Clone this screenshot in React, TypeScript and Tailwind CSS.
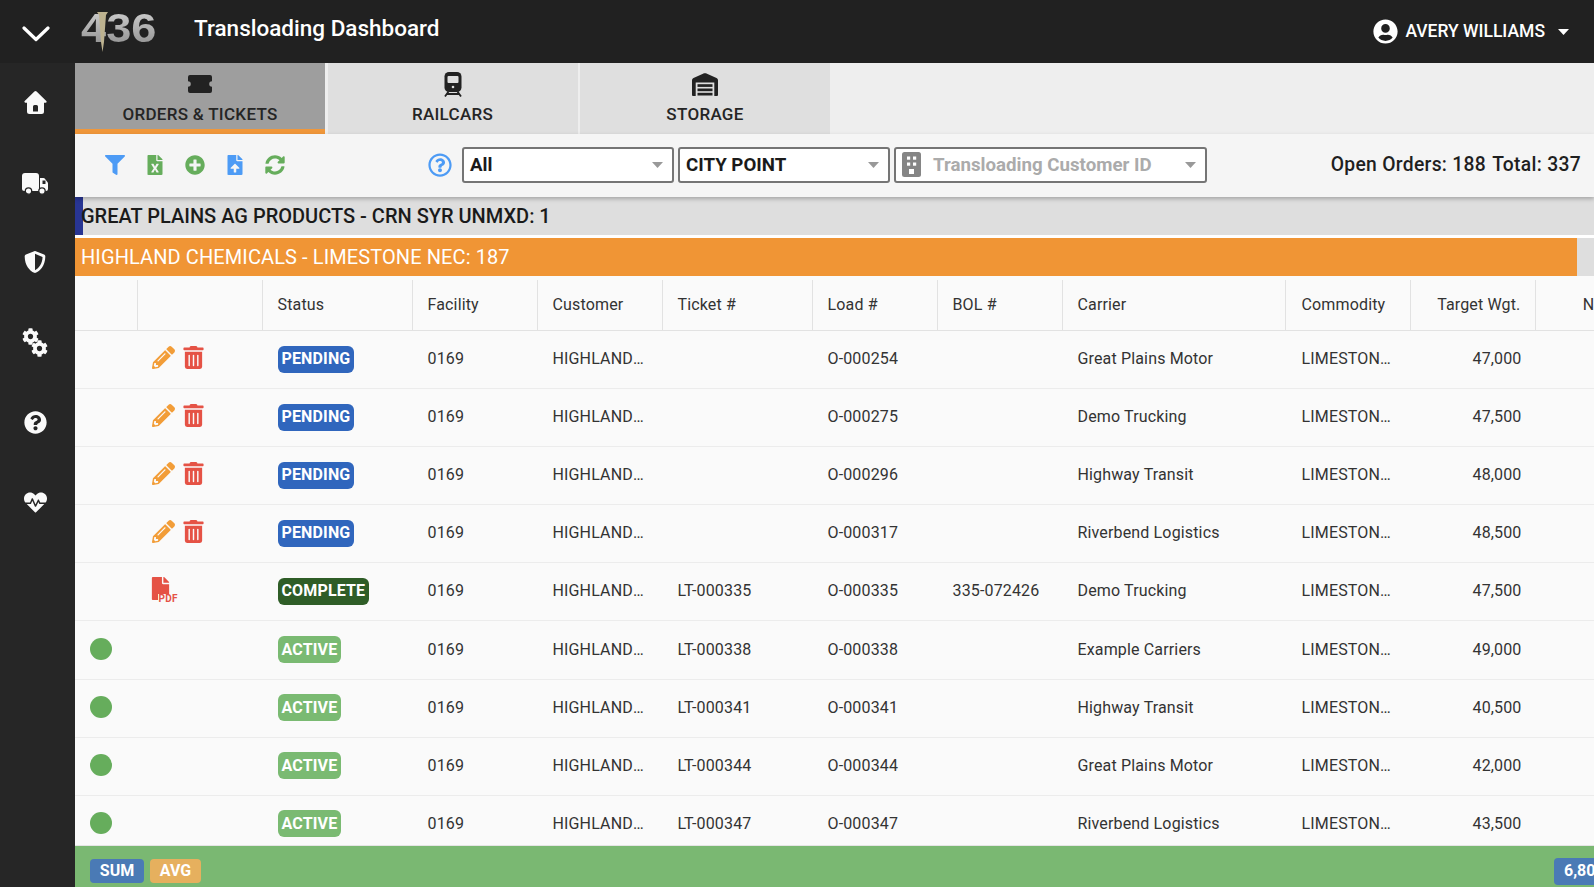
import React from 'react';
import { FaShieldAlt, FaCog, FaQuestionCircle, FaHeartbeat, FaFilter, FaFileExcel, FaPlusCircle, FaFileUpload, FaSyncAlt, FaRegQuestionCircle, FaUserCircle, FaPencilAlt, FaTrashAlt, FaFile } from 'react-icons/fa';

const cols = ['w-[62.5px]', 'w-[125px]', 'w-[150px]', 'w-[125px]', 'w-[125px]', 'w-[150px]', 'w-[125px]', 'w-[125px]', 'w-[223px]', 'w-[125px]', 'w-[125px]', 'w-[125px]'];

type Row = { s: 'PENDING' | 'COMPLETE' | 'ACTIVE'; ticket: string; load: string; bol: string; carrier: string; wgt: string };
const rows: Row[] = [
  { s: 'PENDING', ticket: '', load: 'O-000254', bol: '', carrier: 'Great Plains Motor', wgt: '47,000' },
  { s: 'PENDING', ticket: '', load: 'O-000275', bol: '', carrier: 'Demo Trucking', wgt: '47,500' },
  { s: 'PENDING', ticket: '', load: 'O-000296', bol: '', carrier: 'Highway Transit', wgt: '48,000' },
  { s: 'PENDING', ticket: '', load: 'O-000317', bol: '', carrier: 'Riverbend Logistics', wgt: '48,500' },
  { s: 'COMPLETE', ticket: 'LT-000335', load: 'O-000335', bol: '335-072426', carrier: 'Demo Trucking', wgt: '47,500' },
  { s: 'ACTIVE', ticket: 'LT-000338', load: 'O-000338', bol: '', carrier: 'Example Carriers', wgt: '49,000' },
  { s: 'ACTIVE', ticket: 'LT-000341', load: 'O-000341', bol: '', carrier: 'Highway Transit', wgt: '40,500' },
  { s: 'ACTIVE', ticket: 'LT-000344', load: 'O-000344', bol: '', carrier: 'Great Plains Motor', wgt: '42,000' },
  { s: 'ACTIVE', ticket: 'LT-000347', load: 'O-000347', bol: '', carrier: 'Riverbend Logistics', wgt: '43,500' },
];

const badgeColor = { PENDING: 'bg-[#3066bd]', COMPLETE: 'bg-[#2f5d27]', ACTIVE: 'bg-[#7aba72]' };

function Caret({ className }: { className: string }) {
  return (
    <svg width="11" height="6" viewBox="0 0 11 6" className={className}>
      <path d="M0 0h11L5.5 6z" fill="currentColor" />
    </svg>
  );
}

function HomeIcon() {
  return (
    <svg width="23" height="23" viewBox="0 0 23 23" fill="#fafafa">
      <path fillRule="evenodd" d="M10.4.6a1.6 1.6 0 0 1 2.2 0l9.7 9.400c.7.7.3 1.700-.7 1.700H20v8.800a2.500 2.500 0 0 1-2.500 2.500h-12A2.500 2.500 0 0 1 3 20.500v-8.800H1.400c-1 0-1.400-1-.7-1.700zM9 15.500v5h5v-5a1.500 1.500 0 0 0-1.500-1.500h-2A1.500 1.500 0 0 0 9 15.500z" />
    </svg>
  );
}

function TruckIcon() {
  return (
    <svg width="26" height="22" viewBox="0 0 26 22" fill="#fafafa" className="mt-[3px]">
      <path d="M3 0h11a3 3 0 0 1 3 3v15H2.500A2.500 2.500 0 0 1 0 15.500V3a3 3 0 0 1 3-3z" />
      <path d="M18 5h3.500a1.500 1.500 0 0 1 1.200.6l2.700 3.400c.4.5.6 1 .6 1.600v5.400a2 2 0 0 1-2 2h-6z" />
      <rect x="20.500" y="7.500" width="3" height="3.500" fill="#262626" />
      <circle cx="6.500" cy="18" r="3.200" stroke="#262626" strokeWidth="1.300" />
      <circle cx="20" cy="18" r="3.200" stroke="#262626" strokeWidth="1.300" />
    </svg>
  );
}

function CogsIcon() {
  return (
    <div className="relative w-[26px] h-[29px]">
      <FaCog size={17} className="absolute left-0 top-0" />
      <FaCog size={17} className="absolute right-0 bottom-0" />
    </div>
  );
}

function TicketIcon() {
  return (
    <svg width="26" height="18" viewBox="0 0 26 18" fill="#222">
      <path d="M3 0h20a2 2 0 0 1 2 2v4.200a2.800 2.800 0 0 0 0 5.600V16a2 2 0 0 1-2 2H3a2 2 0 0 1-2-2v-4.200a2.800 2.800 0 0 0 0-5.600V2a2 2 0 0 1 2-2z" />
    </svg>
  );
}

function TrainIcon() {
  return (
    <svg width="18" height="25" viewBox="0 0 18 25">
      <rect x="0.500" y="0" width="17" height="20" rx="4.500" fill="#222" />
      <rect x="3.500" y="4" width="11" height="7" rx="1" fill="#dfdfdf" />
      <circle cx="9" cy="15" r="1.300" fill="#dfdfdf" />
      <path d="M4.500 19.500 1 24.500M13.500 19.500l3.500 5M3.500 22h11" stroke="#222" strokeWidth="1.800" fill="none" />
    </svg>
  );
}

function WarehouseIcon() {
  return (
    <svg width="26" height="23" viewBox="0 0 26 23" fill="#222">
      <path d="M0 22V7.500c0-1 .5-1.900 1.500-2.400L11 .7c1.300-.6 2.700-.6 4 0l9.500 4.400c1 .5 1.500 1.400 1.500 2.400V22a1 1 0 0 1-1 1h-2.700V9.500H3.700V23H1a1 1 0 0 1-1-1z" />
      <rect x="5.500" y="11.200" width="15" height="2.700" />
      <rect x="5.500" y="15.500" width="15" height="2.700" />
      <rect x="5.500" y="19.800" width="15" height="2.700" />
    </svg>
  );
}

function BuildingIcon() {
  return (
    <svg width="19" height="25" viewBox="0 0 19 25">
      <rect width="19" height="25" rx="2.500" fill="#858585" />
      <rect x="5" y="4.500" width="3.200" height="3.200" fill="#fff" />
      <rect x="11" y="4.500" width="3.200" height="3.200" fill="#fff" />
      <rect x="5" y="10.500" width="3.200" height="3.200" fill="#fff" />
      <rect x="11" y="10.500" width="3.200" height="3.200" fill="#fff" />
      <rect x="7" y="17" width="5" height="5" fill="#fff" />
    </svg>
  );
}

function Logo() {
  return (
    <div className="relative w-[75px] h-[40px] ml-[6px] pb-[7px] flex items-center">
      <span className="origin-left scale-x-[1.13] font-['Liberation_Sans',sans-serif] font-bold text-[40px] leading-none bg-gradient-to-b from-[#d2d2d2] to-[#8f8f8f] bg-clip-text text-transparent blur-[0.6px]">436</span>
      <svg width="11" height="40" viewBox="0 0 11 40" className="absolute left-[16px] top-0">
        <path d="M0 0h11L9 3 7 30l-1.500 10L4 30 2 3z" fill="#bdb28f" />
      </svg>
    </div>
  );
}

function Tab({ icon, label, active, w }: { icon: React.ReactNode; label: string; active?: boolean; w: string }) {
  return (
    <div className={`${w} h-[71px] flex flex-col items-center pt-[8px] ${active ? 'bg-[#9e9e9e] border-b-[5px] border-[#f0973a]' : 'bg-[#dfdfdf]'}`}>
      <div className="h-[26px] flex items-center justify-center">{icon}</div>
      <div className="mt-[7px] text-[17px] tracking-[0.3px] leading-[20px] font-medium text-[#252525]">{label}</div>
    </div>
  );
}

function Select({ w, children }: { w: string; children: React.ReactNode }) {
  return (
    <div className={`${w} h-[36px] bg-white border-2 border-[#757575] rounded-[3px] flex items-center pl-[6px] pr-[9px] text-[18.7px] font-bold text-[#1a1a1a]`}>
      {children}
      <Caret className="ml-auto text-[#999]" />
    </div>
  );
}

export default function App() {
  return (
    <div className="h-screen w-full overflow-hidden flex flex-col font-[Roboto,sans-serif] text-[#333]">
      <header className="h-[63px] shrink-0 bg-[#212121] flex items-center text-white">
        <div className="w-[75px] flex justify-center">
          <svg width="28" height="16" viewBox="0 0 28 16" className="mr-[3px] mt-[4px]">
            <path d="M2 2l12 11.500L26 2" stroke="#fff" strokeWidth="3.200" fill="none" strokeLinecap="round" strokeLinejoin="round" />
          </svg>
        </div>
        <Logo />
        <div className="ml-[38px] text-[22.5px] font-medium leading-none -mt-[6px]">Transloading Dashboard</div>
        <div className="ml-auto flex items-center pr-[25px]">
          <FaUserCircle size={25} />
          <span className="ml-[7px] text-[17.5px] font-medium">AVERY WILLIAMS</span>
          <Caret className="ml-[13px] text-white" />
        </div>
      </header>
      <div className="flex-1 min-h-0 flex">
        <aside className="w-[75px] shrink-0 bg-[#262626] text-[#fafafa] flex flex-col pr-[5px]">
          {[<HomeIcon />, <TruckIcon />, <FaShieldAlt size={22} />, <CogsIcon />, <FaQuestionCircle size={23} />, <FaHeartbeat size={23} />].map((ic, i) => (
            <div key={i} className={`${i === 0 ? 'h-[79px]' : 'h-[80px]'} flex items-center justify-center`}>{ic}</div>
          ))}
        </aside>
        <main className="flex-1 min-w-0 flex flex-col">
          <div className="h-[71px] shrink-0 bg-[#eeeeee] flex gap-[2.5px]">
            <Tab w="w-[250px]" active icon={<TicketIcon />} label="ORDERS & TICKETS" />
            <Tab w="w-[250px]" icon={<TrainIcon />} label="RAILCARS" />
            <Tab w="w-[250px]" icon={<WarehouseIcon />} label="STORAGE" />
          </div>
          <div className="relative z-10 h-[63px] shrink-0 bg-[#f5f5f5] shadow-[0_2px_4px_rgba(0,0,0,0.25)] flex items-center pl-[30px] pr-[13px] pb-[2px]">
            <div className="w-[20px] flex justify-center"><FaFilter size={20} className="text-[#4d9bf5]" /></div>
            <div className="w-[20px] ml-[20px] flex justify-center"><FaFileExcel size={20} className="text-[#66ad5c]" /></div>
            <div className="w-[20px] ml-[20px] flex justify-center"><FaPlusCircle size={20} className="text-[#66ad5c]" /></div>
            <div className="w-[20px] ml-[20px] flex justify-center"><FaFileUpload size={20} className="text-[#4d9bf5]" /></div>
            <div className="w-[20px] ml-[20px] flex justify-center"><FaSyncAlt size={20} className="text-[#66ad5c]" /></div>
            <FaRegQuestionCircle size={24} className="ml-[143px] text-[#4d9bf5]" />
            <div className="ml-[10px] flex gap-[4px]">
              <Select w="w-[212px]"><span className="pt-[2px]">All</span></Select>
              <Select w="w-[212px]"><span className="pt-[2px]">CITY POINT</span></Select>
              <Select w="w-[313px]">
                <BuildingIcon />
                <span className="ml-[12px] pt-[2px] text-[#ababab]">Transloading Customer ID</span>
              </Select>
            </div>
            <div className="ml-auto mt-[2px] flex gap-[6px] text-[19.3px] font-medium text-[#1f1f1f] tracking-[0.3px] whitespace-nowrap">
              <span>Open Orders: 188</span>
              <span>Total: 337</span>
            </div>
          </div>
          <div className="relative h-[38px] shrink-0 bg-[#dedede] flex items-center pl-[6px] text-[20px] font-medium text-[#1a1a1a] whitespace-nowrap">
            <div className="absolute left-0 top-0 bottom-0 w-[8px] bg-[#283593]" />
            <span className="relative">GREAT PLAINS AG PRODUCTS - CRN SYR UNMXD: 1</span>
          </div>
          <div className="h-[3px] shrink-0 bg-white" />
          <div className="h-[38px] shrink-0 bg-[#dedede] flex">
            <div className="w-[1502px] bg-[#f09535] flex items-center pl-[6px] text-[20px] tracking-[0.1px] text-white whitespace-nowrap">HIGHLAND CHEMICALS - LIMESTONE NEC: 187</div>
          </div>
          <div className="flex-1 min-h-0 overflow-hidden bg-[#fafafa] text-[16px] tracking-[0.15px]">
            <div className="h-[55px] flex border-b border-[#e2e2e2] pt-[4px]">
              {['', '', 'Status', 'Facility', 'Customer', 'Ticket #', 'Load #', 'BOL #', 'Carrier', 'Commodity', 'Target Wgt.', 'Net Wgt.'].map((h, i) => (
                <div key={i} className={`${cols[i]} shrink-0 flex items-center whitespace-nowrap ${i === 9 ? 'pl-[16px] pr-[14px]' : i === 10 ? 'pl-[16px] pr-[14px]' : 'px-[15px]'} ${i < 11 ? 'border-r border-[#e2e2e2]' : ''} ${i >= 10 ? 'justify-end' : ''}`}>{h}</div>
              ))}
            </div>
            {rows.map((r, i) => (
              <div key={i} className="h-[58.1px] flex items-center border-b-[1.5px] border-[#ececec] pb-[1px]">
                <div className={`${cols[0]} shrink-0 pl-[15px]`}>
                  {r.s === 'ACTIVE' && <div className="w-[22px] h-[22px] rounded-full bg-[#66ad5c] -mt-[2px]" />}
                </div>
                <div className={`${cols[1]} shrink-0 pl-[14px] flex items-center -mt-[3px]`}>
                  {r.s === 'PENDING' && (
                    <>
                      <FaPencilAlt size={23} className="text-[#f29d38]" />
                      <FaTrashAlt size={23} className="ml-[7px] text-[#e55245]" />
                    </>
                  )}
                  {r.s === 'COMPLETE' && (
                    <div className="relative w-[26px] h-[26px] -ml-[3px]">
                      <FaFile size={23} className="text-[#e55245]" />
                      <span className="absolute left-[9px] top-[17px] px-px bg-[#fafafa] text-[10px] leading-[9px] font-bold text-[#e55245] tracking-[0.3px]">PDF</span>
                    </div>
                  )}
                </div>
                <div className={`${cols[2]} shrink-0 pl-[15px]`}>
                  <span className={`inline-flex items-center h-[27px] px-[4px] rounded-[6px] text-[16px] font-bold text-white leading-none ${badgeColor[r.s]}`}>{r.s}</span>
                </div>
                <div className={`${cols[3]} shrink-0 px-[15px]`}>0169</div>
                <div className={`${cols[4]} shrink-0 pl-[15px] pr-[18px] truncate`}>HIGHLAND CHEMICALS</div>
                <div className={`${cols[5]} shrink-0 px-[15px]`}>{r.ticket}</div>
                <div className={`${cols[6]} shrink-0 px-[15px]`}>{r.load}</div>
                <div className={`${cols[7]} shrink-0 px-[15px] whitespace-nowrap`}>{r.bol}</div>
                <div className={`${cols[8]} shrink-0 px-[15px]`}>{r.carrier}</div>
                <div className={`${cols[9]} shrink-0 pl-[16px] pr-[17px] truncate`}>LIMESTONE NEC</div>
                <div className={`${cols[10]} shrink-0 pl-[15px] pr-[14px] text-right`}>{r.wgt}</div>
              </div>
            ))}
          </div>
          <div className="h-[42px] shrink-0 bg-[#7ab872] border-t border-[#e5e5e5] flex items-center pl-[15px] pt-[9px] overflow-hidden whitespace-nowrap text-white font-bold text-[16px]">
            <span className="h-[24px] w-[54px] shrink-0 flex items-center justify-center rounded-[4px] bg-[#4a7ab5]">SUM</span>
            <span className="h-[24px] w-[51px] shrink-0 ml-[6px] flex items-center justify-center rounded-[4px] bg-[#e6b05e]">AVG</span>
            <span className="h-[27px] shrink-0 ml-[1353px] pl-[10px] pr-[8px] flex items-center rounded-[4px] bg-[#4a7ab5]">6,804,500</span>
          </div>
        </main>
      </div>
    </div>
  );
}
